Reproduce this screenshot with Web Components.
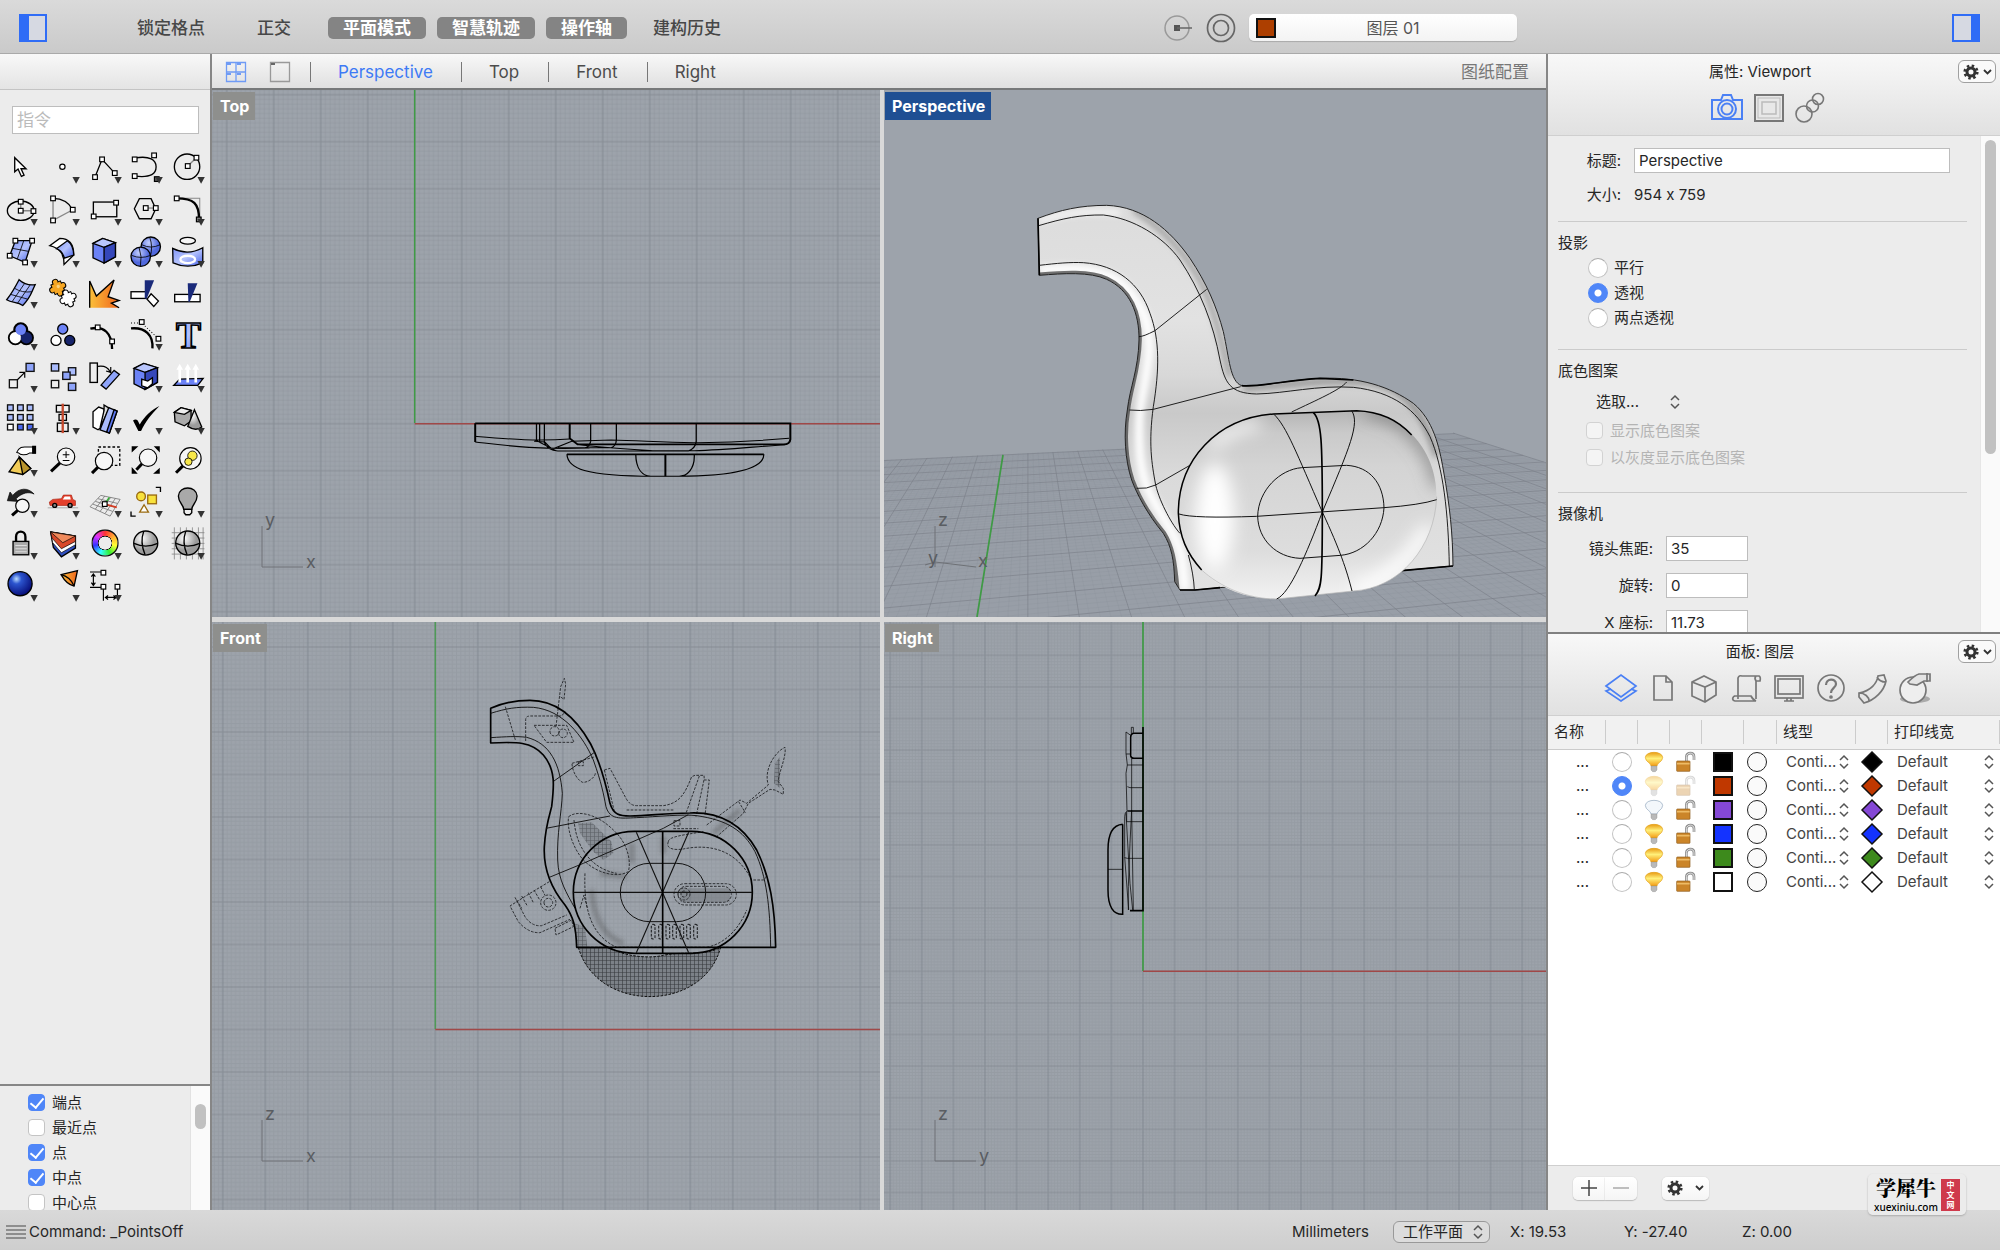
<!DOCTYPE html>
<html lang="zh-CN">
<head>
<meta charset="utf-8">
<title>Rhino</title>
<style>
  html, body { margin: 0; height: 100%; }
  body { font: 15px/20px Inter, "Noto Sans CJK SC", sans-serif; font-feature-settings: "calt" 0; color: #262626; overflow: hidden; background: #ececec; }
  svg { display: block; }
</style>
</head>
<body>
<rh-app></rh-app>
<script>
const BASE = `<style>
*{box-sizing:border-box}
button,input,select{font:inherit;font-feature-settings:inherit;color:inherit;margin:0;padding:0;border:0;background:none;border-radius:0;outline:0}
button{cursor:default;display:flex;align-items:center;justify-content:center}
svg{display:block;overflow:visible}
input[type=radio],input[type=checkbox]{appearance:none;flex:none}
input[type=radio]{width:20px;height:20px;border-radius:50%;background:#fff;border:1px solid #c4c4c4;border-top-color:#aaa}
input[type=radio]:checked{background:radial-gradient(circle,#fff 0 3px,#4f86f8 4px);border-color:#4f86f8}
input[type=checkbox]{width:17px;height:17px;border-radius:4px;background:#fff;border:1px solid #c4c4c4;display:grid;place-items:center}
input[type=checkbox]:checked{background:#4f86f8;border-color:#4f86f8}
input[type=checkbox]:checked::before{content:"";width:6px;height:11px;margin-bottom:3px;border:solid #fff;border-width:0 2px 2px 0;transform:rotate(40deg)}
input[type=checkbox]:disabled{background:#f4f4f4;border-color:#d2d2d2}
input[type=text]{background:#fff;border:1px solid #bdbdbd;min-width:0}
select{appearance:none;text-overflow:ellipsis}
.pop{display:grid;align-items:center}
.pop>*{grid-area:1/1}
.pop>svg{justify-self:end;pointer-events:none}
</style>`;
function define(name, html, setup) {
  customElements.define(name, class extends HTMLElement {
    constructor() {
      super();
      this.attachShadow({ mode: 'open' }).innerHTML = BASE + (typeof html === 'function' ? html(this) : html);
      if (setup) setup(this);
    }
  });
}
const UPDOWN = `<svg width="10" height="14" viewBox="0 0 10 14" fill="none" stroke="#555" stroke-width="1.5"><path d="M1 5 5 1 9 5M1 9 5 13 9 9"/></svg>`;
const GEAR = `<svg width="16" height="16" viewBox="-8 -8 16 16" fill="none" stroke="#333"><circle r="4" stroke-width="3"/><circle r="6.3" stroke-width="2.6" stroke-dasharray="2.47 2.47"/></svg>`;
const CHEV = `<svg width="9" height="6" viewBox="0 0 9 6" fill="none" stroke="#333" stroke-width="1.8"><path d="M1 1 4.500 4.500 8 1"/></svg>`;

/* ---------- top tool bar ---------- */
define('rh-toolbar', `<style>
:host{display:flex;align-items:center;height:54px;background:linear-gradient(#dadada,#cacaca);border-bottom:1px solid #a9a9a9;padding:2px 0 0 19px;font-size:17px}
.modes{display:flex;align-items:center;margin-left:75px;flex:1;gap:11px;color:#474747}
.modes button{height:22px;padding:0 15px;white-space:nowrap;border-radius:5px;font-weight:500}
.modes button.wide{margin:0 11px}
.modes button[aria-pressed=true]{background:#848484;color:#fff;font-weight:700}
.snap{display:flex;align-items:center;padding-right:30px;gap:14px}
.layer{display:flex;align-items:center;width:268px;height:27px;background:linear-gradient(#fff,#f3f3f3);border-radius:5px;box-shadow:0 1px 1px #aaa;padding:0 7px;font-size:16px;color:#555}
.layer i{width:20px;height:20px;background:#ad3f00;border:2px solid #111}
.layer span{flex:1;text-align:center}
.end{width:453px;display:flex;justify-content:flex-end;padding-right:20px}
</style>
<button aria-label="左侧边栏"><svg width="28" height="28"><rect x="1" y="1" width="26" height="26" fill="#d6d9e2" stroke="#2f6cf6" stroke-width="2"/><path d="M0 0H10V28H0Z" fill="#2f6cf6"/></svg></button>
<div class="modes"><button>锁定格点</button><button class="wide">正交</button><button aria-pressed="true">平面模式</button><button aria-pressed="true">智慧轨迹</button><button aria-pressed="true">操作轴</button><button>建构历史</button></div>
<div class="snap">
<button aria-label="记录"><svg width="28" height="28" fill="none"><circle cx="12" cy="14" r="12" stroke="#999" stroke-width="1.500"/><rect x="9" y="11" width="6" height="6" fill="#555"/><path d="M12 14H27" stroke="#666" stroke-width="1.500"/></svg></button>
<button aria-label="过滤"><svg width="28" height="28" fill="none" stroke="#666" stroke-width="1.700"><circle cx="14" cy="14" r="13.500"/><circle cx="14" cy="14" r="7.500"/></svg></button>
<button class="layer"><i></i><span>图层 01</span></button></div>
<div class="end"><button aria-label="右侧边栏"><svg width="28" height="28"><rect x="1" y="1" width="26" height="26" fill="#d6d9e2" stroke="#2f6cf6" stroke-width="2"/><path d="M19 0H28V28H19Z" fill="#2f6cf6"/></svg></button></div>`);

/* ---------- viewport tabs ---------- */
define('rh-tabs', `<style>
:host{display:flex;align-items:center;height:36px;background:linear-gradient(#f8f8f8,#e0e0e0);border-bottom:2px solid #77797a;padding:2px 17px 0 14px;font-size:17px;color:#4c4c4c}
nav{display:flex;align-items:center;flex:1}
nav>button+button{margin-left:24px}
nav a{color:inherit;text-decoration:none;padding:0 28px 0 27px;border-left:1px solid #777;line-height:20px}
nav a+a{padding-right:29px}
nav .first{margin-left:20px}
.on{color:#3d7af5}
.cfg{color:#777}
</style>
<nav><button aria-label="四视图"><svg width="20" height="20" fill="none" stroke="#6f9bf5" stroke-width="1.300"><path d="M.5.5H19.500V19.500H.5ZM10 0V20M0 10H20"/><path d="M1 2H5M11 2H15M1 12H5M11 12H15" stroke-width="2"/></svg></button>
<button aria-label="单视图"><svg width="20" height="20" fill="none" stroke="#999" stroke-width="1.300"><path d="M.5.5H19.500V19.500H.5Z"/><path d="M1 2H5" stroke="#666" stroke-width="2"/></svg></button>
<a class="first" href="#p"><span class="on">Perspective</span></a><a href="#t">Top</a><a href="#f">Front</a><a href="#r">Right</a></nav>
<button class="cfg">图纸配置</button>`);

/* ---------- tool box icons, each on a 125-unit cell ---------- */
const sq = (x, y, f = '#fff') => `<rect x="${x - 7}" y="${y - 7}" width="14" height="14" fill="${f}" stroke="#000" stroke-width="3.500"/>`;
const bx = (x, y, f, s = 24) => `<rect x="${x - s / 2}" y="${y - s / 2}" width="${s}" height="${s}" fill="${f}" stroke="#111" stroke-width="4"/>`;
const mag = (x, y, r, hx, hy, f = '#f6f6f6') => `<path d="M${x - r * .7} ${y + r * .7}L${hx} ${hy}" stroke-width="9"/><circle cx="${x}" cy="${y}" r="${r}" fill="${f}" stroke-width="3.500"/>`;
/* jigsaw piece: outline pass first, then the fills over it */
const piece = (x, y, f, bite) => {
  const body = `<rect x="-14" y="-14" width="28" height="28"/><circle cx="-17" r="7"/><circle cx="17" r="7"/><circle cy="-18" r="7"/><circle cy="18" r="7"/>`;
  return `<g transform="translate(${x} ${y}) rotate(-24)"><g stroke-width="6" fill="#000">${body}</g><g stroke="none" fill="${f}">${body}</g>${bite}</g>`;
};
const TOOLS = [
 ['选取', 0, `<path d="M44 35V77L54 69 64 91 72 87 63 68H78Z" fill="#fff" stroke-width="4"/>`],
 ['点', 1, `<circle cx="61" cy="62" r="8" fill="#fff" stroke-width="3.500"/>`],
 ['多重直线', 1, `<path d="M33 93 54 40 92 81"/>${sq(33,93)}${sq(54,40)}${sq(92,81)}`],
 ['曲线', 1, `<path d="M29 36C75 28 93 42 93 62S80 96 29 90"/>${sq(29,40)}${sq(87,28)}${sq(29,90)}${sq(95,99,'#555')}`],
 ['圆', 1, `<circle cx="60" cy="62" r="38"/><path d="M62 60 88 35" stroke="#888"/>${sq(62,60)}${sq(88,35)}`],
 ['椭圆', 1, `<ellipse cx="62" cy="68" rx="40" ry="29"/><path d="M62 41V68H100" stroke="#888"/>${sq(62,41)}${sq(62,68)}${sq(100,69)}`],
 ['圆弧', 1, `<path d="M33 31V97L92 65" stroke="#888"/><path d="M33 31Q75 32 92 65"/>${sq(33,31)}${sq(92,65)}${sq(33,97)}`],
 ['矩形', 1, `<rect x="28" y="42" width="70" height="44"/>${sq(96,44)}${sq(29,85)}`],
 ['多边形', 1, `<path d="M28 62 43 32H78L92 62 78 92H43Z"/><path d="M62 60H92" stroke="#888"/>${sq(62,60)}${sq(92,60)}`],
 ['圆角', 1, `<path d="M29 31H98V95" stroke="#888" stroke-width="3"/><path d="M29 31C80 31 96 45 96 95" stroke-width="7"/>${sq(29,31)}${sq(95,94,'#777')}`],
 ['曲面', 1, `<path d="M46 32H96L75 97 29 77Z" fill="url(#b)"/><path d="M71 32 52 86M38 55 86 64" stroke-width="2.500"/>${sq(46,32)}${sq(96,32)}${sq(75,97)}${sq(29,77)}`],
 ['单轨扫掠', 1, `<path d="M23 47 53 25C82 25 95 42 95 75L66 103C66 72 55 55 23 47Z" fill="#fff"/><path d="M43 56 76 32C90 42 94 55 95 75L67 84C62 68 55 60 43 56Z" fill="url(#b)"/>`],
 ['立方体', 1, `<path d="M27 40 56 25 94 38V80L60 99 27 83Z" fill="#6b82f6"/><path d="M27 40 56 25 94 38 60 52Z" fill="#b9c6fd"/><path d="M60 52V99L94 80V38Z" fill="#3547ba"/>`],
 ['布尔运算', 1, `<circle cx="77" cy="50" r="29" fill="url(#s)"/><circle cx="47" cy="80" r="29" fill="url(#s)"/><path d="M20 76Q48 88 76 76M42 52Q52 80 46 108M50 44Q78 58 105 44M74 22Q84 50 76 78" stroke-width="2.500"/>`],
 ['投影曲线', 1, `<ellipse cx="62" cy="32" rx="23" ry="10" fill="#fff" fill-opacity=".5"/><path d="M17 55Q62 78 107 53V98Q62 118 18 98Z" fill="url(#b)"/><ellipse cx="62" cy="88" rx="22" ry="11" stroke="#fff" stroke-width="7"/>`],
 ['网格', 1, `<path d="M57 26Q78 45 105 41C92 68 92 80 68 103 52 92 36 96 20 86 34 68 42 55 57 26Z" fill="url(#b)"/><path d="M44 52Q66 66 95 62M32 70Q54 76 82 84M73 38 36 92M90 42 52 97" stroke-width="2.500"/>`],
 ['组合', 0, piece(47, 50, '#f5a623', '<circle cx="3" cy="-3" r="5" fill="#fbd27e" stroke="none"/>') + piece(78, 82, '#fff', '')],
 ['炸开', 0, `<path d="M17 110V30L37 75 90 27 72 77 105 88 82 96 105 110" fill="url(#o)"/>`],
 ['修剪', 0, `<rect x="18" y="62" width="45" height="20" fill="#fff"/><path d="M66 84 78 68 100 90 86 106Z" fill="#fff"/><path d="M59 28H87L65 82H59Z" fill="#1a2a7a" stroke="none"/>`],
 ['分割', 0, `<rect x="23" y="70" width="76" height="22" fill="#fff"/><path d="M62 37H91L68 92H64Z" fill="#1a2a7a" stroke="none"/>`],
 ['群组', 1, `<g stroke-width="9"><circle cx="62" cy="50" r="18"/><circle cx="46" cy="74" r="18"/><circle cx="79" cy="74" r="18"/></g><g stroke="none"><circle cx="46" cy="74" r="17" fill="#fff"/><circle cx="79" cy="74" r="17" fill="#17246b"/><circle cx="62" cy="50" r="16" fill="#6b82f6"/></g>`],
 ['解散群组', 0, `<circle cx="62" cy="48" r="15" fill="#6b82f6"/><circle cx="42" cy="82" r="15" fill="#fff"/><circle cx="83" cy="82" r="15" fill="#17246b"/>`],
 ['编辑点', 0, `<path d="M19 47C60 38 84 60 84 108" stroke-width="7"/>${sq(41,43)}${sq(84,85)}`],
 ['控制点', 1, `<path d="M18 46C60 42 85 65 82 106" stroke-width="7"/><path d="M18 30H50L100 77" stroke-dasharray="3 6" stroke-width="3"/>${sq(50,27)}${sq(100,77)}`],
 ['文字', 0, `<text x="64" y="104" text-anchor="middle" font-family="Liberation Serif" font-weight="700" font-size="112" fill="url(#b)" stroke-width="5">T</text>`],
 ['移动', 1, `${bx(90,37,'#8ea4fa')}${bx(40,86,'#eee')}<path d="M52 74 72 54M58 52H74V68" stroke-width="3.500"/>`],
 ['复制', 0, `${bx(39,37,'#a9bbfc',22)}${bx(90,49,'#a9bbfc',22)}${bx(73,62,'#8ea4fa',22)}${bx(90,95,'#8ea4fa',22)}${bx(39,87,'#eee',22)}`],
 ['旋转', 0, `<rect x="18" y="24" width="22" height="58" fill="#eee"/><path d="M42 34Q68 30 78 50M80 36V52L66 48" stroke-width="3.500"/><path d="M51 90 90 46 106 58 66 102Z" fill="#8ea4fa"/>`],
 ['实体工具', 1, `<path d="M27 40 56 25 97 38V82L60 103 27 86Z" fill="#6b82f6"/><path d="M27 40 56 25 97 38 60 52Z" fill="#b9c6fd"/><path d="M60 52V103L97 82V38Z" fill="#3547ba"/><path d="M50 72 68 78 82 68V86L68 98 50 92Z" fill="#fff"/>`],
 ['法线', 1, `<path d="M20 91 38 72 108 70 92 91Z" fill="#6b82f6"/><path d="M38 82V38M62 82V38M86 82V38" stroke="#fff" stroke-width="8"/><path d="M28 44 38 26 48 44ZM52 44 62 26 72 44ZM76 44 86 26 96 44Z" fill="#fff" stroke="none"/>`],
 ['阵列', 1, [32,61,90].map((y,r)=>[31,61,90].map((x,c)=>bx(x,y,r==2?(c?'#4b68ee':'#fff'):'#a9bbfc',17)).join('')).join('')],
 ['对齐', 1, `<rect x="43" y="25" width="38" height="20" fill="#eee"/><rect x="51" y="52" width="22" height="18" fill="#eee"/><rect x="46" y="78" width="32" height="25" fill="#eee"/><path d="M62 20V108" stroke="#c5482c" stroke-width="7"/>`],
 ['镜像', 1, `<path d="M27 44 44 30 60 36V84L42 98 27 90Z" fill="#fff"/><path d="M60 24 76 34 48 92 60 40Z" fill="#ddd"/><path d="M74 32 99 42 76 108 48 98Z" fill="#a9bbfc"/><path d="M90 38 99 42 76 108 68 104Z" fill="#5c77ee"/>`],
 ['检查', 1, `<path d="M24 70Q32 64 38 70L44 82C58 58 80 38 103 27 80 50 60 75 48 102H40Z" fill="#000" stroke="none"/>`],
 ['着色', 1, `<path d="M22 46 42 32 72 40V72L52 86 24 74Z" fill="#aaa"/><path d="M22 46 42 32 72 40 52 52Z" fill="#eee"/><path d="M82 38 104 90Q86 104 62 88Z" fill="url(#g)"/>`],
 ['操作轴工具', 1, `<path d="M50 40C58 20 72 24 82 24H106V42H88C76 50 60 48 56 42Z" fill="#fff" stroke-width="3"/><path d="M98 22H106V42H98Z" fill="#000"/><path d="M27 98 58 54 92 88 68 106Z" fill="#f2cc57"/><path d="M58 54 68 106 92 88Z" fill="#b8942c"/>`],
 ['缩放', 0, `${mag(72,53,26,27,97)}<path d="M62 47H82M72 37V57M62 64H82" stroke-width="3"/>`],
 ['框选缩放', 0, `<rect x="43" y="24" width="64" height="55" stroke-dasharray="8 6"/>${mag(60,66,26,24,102)}`],
 ['缩放至最大', 0, `${mag(69,56,26,34,92)}<path d="M20 22H40L20 40ZM104 22H86L104 40ZM20 104V84L38 104ZM104 104H84L104 86Z" fill="#000" stroke="none"/>`],
 ['缩放选取物体', 0, `${mag(70,58,32,27,101)}<g fill="#f8e84a" stroke-width="2.500"><circle cx="76" cy="50" r="14"/><circle cx="64" cy="68" r="11"/></g>`],
 ['复原视图', 1, `<path d="M22 62 30 36 38 46C58 22 84 22 102 42 86 34 66 38 48 56L54 64Z" fill="#222" stroke-width="2"/>${mag(67,77,20,36,106)}`],
 ['设置视图', 1, `<path d="M17 83H108" stroke="#bbb" stroke-width="4"/><path d="M22 66 32 58 58 56 64 45H88L92 58 100 62V76H24Z" fill="#e4402c" stroke="#a21" stroke-width="2"/><path d="M68 49H84L86 58H62Z" fill="#fff" stroke="none"/><circle cx="38" cy="76" r="6" fill="#888"/><circle cx="84" cy="76" r="6" fill="#888"/>`],
 ['工作平面', 1, `<path d="M50 46 108 58 78 108 18 80ZM62 48 34 87M80 52 48 94M94 55 63 100M42 56 100 70M34 64 94 82M26 72 86 94" stroke="#777" stroke-width="2.500"/><path d="M62 72 76 52" stroke="#3a3" stroke-width="5"/><path d="M62 72 98 82" stroke="#d43b22" stroke-width="5"/>${sq(62,72)}`],
 ['选取物件', 1, `<circle cx="48" cy="49" r="13" fill="#f8e23c" stroke="#9a6b10"/><rect x="68" y="45" width="26" height="26" fill="#f8e23c" stroke="#9a6b10"/><path d="M57 74 70 96H44Z" fill="#fff" stroke="#9a6b10"/><path d="M92 22H106V36M18 94V108H32" stroke-width="4"/>`],
 ['灯光', 1, `<path d="M50 88C50 74 34 68 34 48 36 16 88 16 90 48 90 68 74 74 74 88Z" fill="#a9a9a9"/><path d="M51 88H74V98L68 104H56L51 98Z" fill="#eee"/>`],
 ['锁定', 1, `<path d="M48 60V44C48 24 76 24 76 44V60" stroke-width="7"/><rect x="39" y="58" width="47" height="40" fill="#aaa"/><path d="M46 70H80M46 80H80M46 89H80" stroke="#ddd" stroke-width="3"/>`],
 ['图层', 1, `<path d="M26 30 100 42V78L58 104 34 76Z" fill="#2f4fc0"/><path d="M26 30 100 42V68L58 92 32 62Z" fill="#fff" stroke-width="2"/><path d="M26 30 100 42V58L58 80 30 48Z" fill="#d8492a" stroke-width="2"/><path d="M26 30 100 42 62 62Z" fill="#f08a5c" stroke-width="2"/>`],
 ['颜色', 1, `<foreignObject x="22" y="22" width="82" height="82"><div xmlns="http://www.w3.org/1999/xhtml" style="width:82px;height:82px;border-radius:50%;border:4px solid #111;background:radial-gradient(circle,#ececec 0 19px,#111 20px 21px,transparent 22px),conic-gradient(#f33,#fa3,#ff3,#3e3,#3ff,#33f,#d3f,#f33)"></div></foreignObject>`],
 ['着色球', 0, `<circle cx="62" cy="63" r="36" fill="url(#g)"/><path d="M27 64Q62 80 98 64M56 28Q44 60 60 98" stroke-width="4"/>`],
 ['网格球', 1, `<path d="M14 32H112M14 48H112M14 64H112M14 80H112M14 96H112M22 16V112M40 16V112M58 16V112M76 16V112M94 16V112M108 16V112" stroke="#888" stroke-width="2.500"/><circle cx="62" cy="63" r="36" fill="url(#g)"/><path d="M27 64Q62 80 98 64M56 28Q44 60 60 98" stroke-width="4"/>`],
 ['渲染', 1, `<circle cx="60" cy="59" r="36" fill="url(#n)"/>`],
 ['聚光灯', 1, `<path d="M57 32 106 20 96 66Q74 62 57 32Z" fill="url(#o)"/><path d="M57 32Q84 38 96 66" />`],
 ['标注', 1, `<path d="M18 24H52M18 70H52M28 32V62M22 38 28 30 34 38M22 56 28 64 34 56M58 70V110M100 70V98M66 100H94M72 94 64 100 72 106M88 94 96 100 88 106" stroke-width="3.500"/>${sq(58,26)}${sq(58,68)}${sq(100,68)}`],
];
const DEFS = `<defs><linearGradient id="b" x2="1" y2="1"><stop stop-color="#7f95f8"/><stop offset=".5" stop-color="#b4c2fd"/><stop offset="1" stop-color="#4560e8"/></linearGradient><linearGradient id="o" x2="1"><stop stop-color="#fbc03a"/><stop offset="1" stop-color="#f0641c"/></linearGradient><radialGradient id="s" cx=".4" cy=".3"><stop stop-color="#c3cffd"/><stop offset="1" stop-color="#5068dd"/></radialGradient><radialGradient id="g" cx=".35" cy=".3"><stop stop-color="#fff"/><stop offset="1" stop-color="#9b9b9b"/></radialGradient><radialGradient id="n" cx=".35" cy=".3" r=".7"><stop stop-color="#b9dcff"/><stop offset=".3" stop-color="#2c55cf"/><stop offset="1" stop-color="#08107c"/></radialGradient></defs>`;
define('rh-toolbox', `<style>
:host{display:flex;flex-direction:column;min-height:0;flex:1}
header{height:36px;background:linear-gradient(#f8f8f8,#e4e4e4);border-bottom:1px solid #c4c4c4}
input[type=text]{margin:16px 11px 12px 12px;height:28px;padding:0 4px;font-size:17px}
input::placeholder{color:#bbb}
.grid{display:grid;grid-template:repeat(11,1fr)/repeat(5,1fr);height:459px;width:209px}
.grid svg{width:100%;height:100%}
</style><header></header><input type="text" placeholder="指令" aria-label="指令">
<div class="grid">${TOOLS.map(([n, a, s]) => `<button aria-label="${n}"><svg viewBox="0 0 125 125" fill="none" stroke="#000" stroke-width="4">${DEFS}${s}${a ? '<path d="M91 93H113L102 113Z" fill="#333" stroke="none"/>' : ''}</svg></button>`).join('')}</div>`);

define('rh-osnap', `<style>
:host{display:flex;height:126px;border-top:2px solid #868686;overflow:hidden}
.list{flex:1;padding:4px 0 0 28px}
label{display:flex;align-items:center;height:25px;gap:7px;white-space:nowrap}
.bar{width:20px;background:#fafafa;border-left:1px solid #e2e2e2;padding:18px 4px}
.bar i{display:block;height:25px;width:11px;border-radius:6px;background:#c1c1c1}
</style><div class="list">${[['端点',1],['最近点',0],['点',1],['中点',1],['中心点',0]].map(([t,c])=>`<label><input type="checkbox"${c?' checked':''}>${t}</label>`).join('')}</div><div class="bar"><i></i></div>`);

/* ---------- viewports ---------- */
define('rh-viewport', el => `<style>
:host{display:grid;background:#9da3ab;overflow:hidden;min-width:0;min-height:0}
:host>*,.t,::slotted(svg){grid-area:1/1}
::slotted(svg){width:100%;height:100%;min-height:0}
.t{z-index:1;justify-self:start;align-self:start;margin:2px 0 0 1px;padding:1px 6px 0 7px;font:700 16px/27px Inter,sans-serif;color:#fff;background:#8e8f8d}
:host([active]) .t{background:#1f4f93}
</style><slot></slot><span class="t">${el.getAttribute('name')}</span>`);

function planar(id, x, y, w, h, ox, oy, step) {
  const m = step / 10;
  let d = '';
  for (let i = 1; i < 10; i++) d += `M${i * m} 0V${step}M0 ${i * m}H${step}`;
  return `<defs><pattern id="${id}" x="${ox}" y="${oy}" width="${step}" height="${step}" patternUnits="userSpaceOnUse"><path d="${d}" stroke="#858b94" stroke-opacity=".3" stroke-width="1"/><path d="M0 0V${step}M${step} 0V${step}M0 0H${step}M0 ${step}H${step}" stroke="#7f858d" stroke-opacity=".75" stroke-width="1.200"/></pattern></defs><rect x="${x}" y="${y}" width="${w}" height="${h}" fill="url(#${id})"/>`;
}
const axes = (x, y, up, right) => `<path d="M${x} ${y - 41}V${y}H${x + 41}" fill="none" stroke="#6e7176"/><g font-family="Inter" font-size="18" fill="#5a5d62"><text x="${x + 3}" y="${y - 41}">${up}</text><text x="${x + 44}" y="${y + 1}">${right}</text></g>`;
const frame = (x, y, w, h, inner) => `<svg viewBox="${x} ${y} ${w} ${h}" preserveAspectRatio="xMidYMid slice">${inner}</svg>`;

const topView = frame(212, 90, 668, 527, planar('gt', 212, 90, 668, 527, 414.7, 423.7, 47) +
 `<path d="M414.700 90V423" stroke="#3f9b45" stroke-width="1.500"/><path d="M414.700 423.700H880" stroke="#a04848" stroke-width="1.500"/>${axes(262, 567, 'y', 'x')}
 <g transform="translate(200 400) scale(.3954 .33333)" fill="none" stroke="#000"><g stroke-width="5"><path d="M696 70H1493V118Q1492 133 1476 133H955L935 115V70M696 70V126"/><path d="M928 163H1426M1177 163V229"/></g><g stroke-width="3.200"><path d="M696 109C790 118 850 124 935 117M696 126C770 136 850 150 985 144M851 70V124M859 70V124M871 70V128Q880 152 905 153H1235Q1253 145 1255 125V70M988 70V124Q985 143 970 144M1053 70V120Q1052 138 1040 143H905M845 124 872 126 890 148 940 124 1040 120C1120 122 1180 129 1260 128S1420 122 1490 115M955 133C1020 145 1100 149 1150 152H1250C1330 150 1400 140 1480 134M848 120 900 152M928 163C930 205 970 229 1150 229H1210C1360 228 1426 205 1426 163M1102 163C1103 210 1120 228 1140 229M1250 163C1252 210 1230 228 1212 229"/></g></g>`);

const rightView = frame(884, 622, 662, 588, planar('gr', 884, 622, 662, 588, 1143, 971.3, 31.6) +
 `<path d="M1143 622V971" stroke="#3f9b45" stroke-width="1.700"/><path d="M1143 971.300H1548" stroke="#a04848" stroke-width="1.500"/>${axes(935, 1161, 'z', 'y')}
 <g transform="translate(880 610) scale(.33333)" fill="none" stroke="#000"><g stroke-width="4.500"><path d="M789 351V902H750" stroke-width="5"/><path d="M789 370H760Q752 372 752 382V438Q754 445 762 445H789M789 603H742M728 643V913C700 914 684 890 684 840V720C684 670 700 645 728 643"/></g><g stroke-width="2.500" opacity=".85"><path d="M754 370V352H760V368M752 376 738 366V430L742 465 738 490 741 602M738 432H752M742 465H789M742 530 750 533H789M755 445V600L760 900M742 603Q733 606 734 630V740L746 900M740 606V635H789M734 743 742 745H789M738 610 750 820 758 900M755 600 750 700 745 830V900M684 778H728"/></g></g>`);

const BODY_F = 'M122 145C160 128 200 121 240 121 330 121 385 185 422 252 450 305 465 360 480 430 490 465 510 468 540 468 600 468 640 459 720 459 820 455 880 500 920 570 960 650 975 740 977 862H380C378 800 370 770 345 735 300 680 280 620 283 560 286 500 300 460 305 440 312 380 318 330 280 285 245 245 200 245 122 249Z';
const frontView = frame(212, 622, 668, 588, planar('gf', 212, 622, 668, 588, 435.3, 1029.5, 42.5) +
 `<path d="M435.300 622V1029" stroke="#3f9b45" stroke-opacity=".8" stroke-width="1.500"/><path d="M435.300 1029.500H880" stroke="#a04848" stroke-width="1.500"/>${axes(262, 1161, 'z', 'x')}
 <defs><pattern id="hatch" width="12" height="12" patternUnits="userSpaceOnUse"><path d="M0 0H12V12H0Z" fill="#74797f" fill-opacity=".8"/><path d="M0 0V12M0 0H12" stroke="#34373b" stroke-width="3.500"/></pattern><filter id="bl" x="-50%" y="-50%" width="200%" height="200%"><feGaussianBlur stdDeviation="6"/></filter></defs>
 <g transform="translate(450 660) scale(.33333)" fill="none" stroke="#111" stroke-linejoin="round">
 <path d="M385 862C440 1059 760 1059 812 862C760 890 700 872 640 886S500 880 480 862Z" fill="url(#hatch)" stroke-width="3" stroke-dasharray="8 4"/><path d="M372 790 405 800 412 862H380Z" fill="url(#hatch)" stroke="none" opacity=".7"/>
 <g filter="url(#bl)" stroke="#444" stroke-opacity=".35" stroke-width="16"><path d="M425 690C430 770 460 830 520 850M450 640 530 650M545 550V610M640 530V580M790 520 870 450" /></g>
 <path d="M385 490 425 487 485 545 490 580 460 600 430 575 390 520Z" fill="url(#hatch)" stroke="none" opacity=".65"/>
 <path d="M975 310 990 290V385L972 370Z" fill="url(#hatch)" stroke="none" opacity=".7"/><path d="M690 685H840V725H690Z" fill="#55585c" fill-opacity=".3" stroke="none"/>
 <g stroke-width="2.800" stroke-dasharray="8 4" stroke="#26282b">
 <path d="M318 200 332 80 343 55 347 72 342 118 328 108M166 140 197 243M227 243V178Q228 168 240 168H335L345 155M252 196H350L372 247H290ZM300 214A14 14 0 1 0 328 214 14 14 0 1 0 300 214M326 220A13 13 0 1 0 352 220 13 13 0 1 0 326 220M366 310 436 290M436 340C435 352 415 368 398 367 380 360 366 330 366 310M385 305H400V317H385Z"/>
 <path d="M463 330 480 325 528 415Q540 437 560 437H640C690 430 705 400 725 350L735 346H762L763 360H778L765 465M748 348 708 460M762 360 738 470M463 330 492 450M530 450H670"/>
 <path d="M770 495 870 420 890 430 955 375C940 330 975 275 1005 262 1010 290 985 340 985 365L1000 385V403L975 390 960 388 895 430 880 460 800 530M866 425 886 458M672 482H690V498H672ZM670 506H745M655 545C655 530 700 525 760 515M655 545C645 570 680 570 700 567 780 550 860 570 905 660H940Q950 655 948 640"/>
 <path d="M356 470C380 450 440 460 490 510 530 545 545 600 535 635 500 655 440 640 400 600 365 560 350 500 356 470ZM372 480C380 580 440 630 500 640M405 640C400 760 430 830 500 862H770C830 850 870 800 890 750M480 862H840"/>
 <path d="M298 665 240 700 180 738 205 785Q235 820 270 818L360 778M195 712 225 770Q245 800 275 797L350 765M315 805 365 780 370 800 318 825ZM200 720 215 745M215 708 232 738M235 698 250 728M252 690 268 718M272 680 285 706M272 728A23 23 0 1 0 318 728 23 23 0 1 0 272 728M282 728A13 13 0 1 0 308 728 13 13 0 1 0 282 728M390 745 402 705 412 745"/>
 <rect x="672" y="671" width="187" height="64" rx="32"/><rect x="684" y="679" width="160" height="48" rx="24"/><circle cx="702" cy="702" r="18"/><circle cx="702" cy="702" r="9"/>
 ${[604,626,648,668,690,710,731].map(x=>`<rect x="${x}" y="793" width="11" height="44" rx="5" stroke-width="3.500"/>`).join('')}
 </g>
 <path d="${BODY_F}" stroke="#000" stroke-width="5"/>
 <g stroke-width="2.800"><path d="M122 160C170 145 200 140 250 142 340 150 400 230 430 300 455 370 460 400 468 440 480 480 510 475 560 473 620 470 700 462 740 467 830 480 880 510 915 575 950 650 960 740 962 862M122 233C170 230 200 228 230 232 300 250 330 310 337 400 335 460 320 520 323 600 325 660 350 700 375 745M312 363 435 276M288 505 480 468M298 652 400 610 640 505 715 464"/></g>
 <rect x="370" y="514" width="537" height="366" rx="183" stroke="#000" stroke-width="5"/><rect x="511" y="610" width="256" height="175" rx="87" stroke-width="3"/>
 <path d="M370 697H907M559 517 716 878M716 517 559 878" stroke-width="3.300"/><path d="M638 514V880" stroke="#000" stroke-width="5"/></g>`);

/* ground plane: depth lines meet at V1, cross lines at V2, both on y = 297 */
function ground() {
  const V1 = [1028, 297], V2x = 4343, farY = x => 433 + (1453 - x) * .0474;
  let a = '', c = '';
  const depth = x0 => {
    const y0 = farY(x0), t = (900 - 297) / (y0 - 297);
    return `M${x0} ${y0}L${V1[0] + (x0 - V1[0]) * t} 900`;
  };
  for (let k = -60; k < 18; k++) {
    const x = 1003 + k * 25.3 * (k > 0 ? .985 : 1);
    a += depth(x);
    if (k < 17) for (let j = 1; j < 5; j++) c += depth(x + j * 5.06);
  }
  a += depth(1453);
  for (let n = 0; n < 16; n += .2) {
    const d = 1 / (.00633 - n * .00025), y = 297 + d;
    const sl = (y - 297) / (V2x - 1003), k = (1453 - 1028) / 136;
    const xr = (297 + d + 1003 * sl - 297 + 1028 / k) / (sl + 1 / k);
    const seg = `M800 ${y + 203 * sl}L${xr} ${y - (xr - 1003) * sl}`;
    if (Math.abs(n - Math.round(n)) < .05) a += seg; else c += seg;
  }
  return `<path d="M884 460 1453 433 2000 608V900H884Z" fill="#8d94a0" fill-opacity=".3"/><path d="${c}" stroke="#79818b" stroke-opacity=".12" fill="none"/><path d="${a}" stroke="#7b8089" stroke-opacity=".65" fill="none"/>`;
}
const BODY_P = 'M114 115C180 90 240 76 320 76 430 80 510 150 570 235 620 310 650 380 670 455 688 535 690 605 725 617 780 622 860 600 960 595 1080 590 1170 620 1240 670 1300 720 1318 800 1330 870 1350 980 1358 1060 1359 1158L1205 1172 585 1230H540L524 1205C522 1140 515 1100 490 1060 440 1000 410 940 395 900 375 840 370 760 382 690 390 620 415 570 417 480 418 400 390 330 320 298 270 275 190 280 118 286Z';
const WHEEL = 'M820 702 1070 692C1200 695 1310 800 1310 950 1305 1100 1200 1225 1060 1233L830 1257C660 1257 540 1150 535 1000 535 840 650 715 820 702Z';
const perspView = frame(884, 90, 662, 527, ground() +
 `<path d="M1003 455 977 617" stroke="#3f9b45" stroke-width="1.700"/>
 <path d="M935 526V567M925 565 935 562 976 567" fill="none" stroke="#6e7176"/><g font-family="Inter" font-size="18" fill="#5a5d62"><text x="938" y="526">z</text><text x="928" y="564">y</text><text x="978" y="567">x</text></g>
 <defs><linearGradient id="pb" x2="0" y2="1"><stop stop-color="#dcdcdc"/><stop offset=".3" stop-color="#e2e2e2"/><stop offset=".44" stop-color="#d8d8d8"/><stop offset=".54" stop-color="#c9c9c9"/><stop offset=".7" stop-color="#dadada"/><stop offset="1" stop-color="#e2e2e2"/></linearGradient>
 <linearGradient id="pw" x2="0" y2="1"><stop stop-color="#b4b4b4"/><stop offset=".12" stop-color="#cacaca"/><stop offset=".3" stop-color="#d4d4d4"/><stop offset=".75" stop-color="#dddddd"/><stop offset="1" stop-color="#f2f2f2"/></linearGradient>
 <filter id="f1" x="-50%" y="-50%" width="200%" height="200%"><feGaussianBlur stdDeviation="9"/></filter><filter id="f2" x="-50%" y="-50%" width="200%" height="200%"><feGaussianBlur stdDeviation="26"/></filter><clipPath id="cb"><path d="${BODY_P}"/></clipPath><clipPath id="cw"><path d="${WHEEL}"/></clipPath></defs>
 <g transform="translate(1000 180) scale(.33333)" fill="none" stroke="#111">
 <path d="${BODY_P}" fill="url(#pb)" stroke="none"/>
 <g clip-path="url(#cb)"><g filter="url(#f1)">
 <path d="M400 90C500 150 560 230 600 300 650 400 672 520 690 590" stroke="#888" stroke-width="12"/><path d="M118 122C200 98 260 90 360 100" stroke="#fff" stroke-width="12"/>
 <path d="M118 270C220 262 330 265 385 330 440 400 450 440 447 520 440 600 420 660 418 720 415 830 425 880 440 920 480 1010 530 1060 545 1130L555 1230" stroke="#fff" stroke-width="26"/>
 <path d="M730 624C860 618 960 596 1090 606S1270 700 1310 830" stroke="#777" stroke-width="12"/></g>
 <path d="M118 286C190 280 270 275 320 298 390 330 418 400 417 480 415 570 390 620 382 690 370 760 375 840 395 900 410 940 440 1000 490 1060 515 1100 522 1140 530 1225" stroke="#444" stroke-opacity=".75" stroke-width="17"/></g>
 <path d="${BODY_P}" stroke="#222" stroke-width="3"/>
 <path d="M114 115 118 286M540 1230H585L660 1223M1205 1172 1359 1158M725 617C780 622 860 600 960 595L1060 600" stroke="#000" stroke-width="5"/>
 <g stroke-width="2.800"><path d="M116 137C190 115 240 104 310 105 400 115 490 170 540 240 600 330 640 430 660 540 675 610 690 640 770 642 860 640 950 615 1060 622 1180 635 1250 690 1290 770 1330 860 1345 1000 1348 1158M118 256C170 250 210 246 250 248 350 255 420 310 450 400 480 480 478 570 460 680 445 790 455 850 467 915 480 970 520 1040 540 1060M565 1125C575 1160 582 1200 583 1230M417 470Q430 470 465 452L620 328M388 690Q420 694 460 688L722 620M410 925Q440 928 467 915L568 857M875 696C950 660 1020 630 1040 606"/></g>
 <path d="${WHEEL}" fill="url(#pw)" stroke="none"/>
 <g clip-path="url(#cw)"><g filter="url(#f2)"><ellipse cx="645" cy="1010" rx="58" ry="160" fill="#fff" stroke="none"/><path d="M630 800Q690 745 780 728" stroke="#fff" stroke-width="28"/><path d="M1290 1040Q1200 1190 1060 1235" stroke="#fff" stroke-width="44"/><path d="M1100 690C1210 700 1305 800 1318 920" stroke="#777" stroke-width="30"/></g></g>
 <path d="M1310 950C1305 1100 1200 1225 1060 1233L830 1257C740 1257 660 1220 605 1170" stroke="#b5b5b5" stroke-width="2"/><path d="M605 1170C560 1120 538 1070 535 1000 535 840 650 715 820 702L1070 692C1130 694 1190 715 1235 765" stroke="#000" stroke-width="4.500"/>
 <g stroke-width="3"><path d="M537 1002Q580 1016 770 1009L1152 983Q1260 975 1310 959M822 703C860 740 890 820 967 996 1020 1110 1040 1170 1056 1233M1055 692C1080 730 1050 800 967 996 920 1120 870 1240 830 1257M905 863 1040 856C1110 860 1150 910 1152 983 1148 1060 1090 1120 1022 1126L900 1135C830 1132 775 1080 773 1009 775 930 840 868 905 863Z"/><path d="M940 698C965 720 967 790 967 996S965 1225 945 1248" stroke="#000" stroke-width="5"/></g></g>`);

/* ---------- panel header with title, gear button and icon row ---------- */
define('rh-panel-head', el => `<style>
:host{display:flex;flex-direction:column;height:82px;background:linear-gradient(#f8f8f8,#e1e1e1);border-bottom:1px solid #cfcfcf;flex:none}
.top{display:grid;grid-template-columns:10px 1fr 38px;padding:6px 4px 0;align-items:center}
.top span{text-align:center}
.gear{height:23px;border:1px solid #a0a0a0;border-radius:6px;background:#fafafa;gap:4px}
.row{display:flex;justify-content:center;align-items:center;height:50px;padding-right:12px}
</style><div class="top"><i></i><span>${el.getAttribute('heading')}</span><button class="gear" aria-label="选项">${GEAR}${CHEV}</button></div><div class="row"><slot></slot></div>`);

define('rh-properties', `<style>
:host{display:flex;flex-direction:column;height:580px;border-bottom:2px solid #808080;overflow:hidden}
.body{flex:1;display:flex;min-height:0}
form{flex:1;padding:0 13px 0 10px;overflow:hidden}
section{border-top:1px solid #cbcbcb;padding:10px 0 0}
section:first-child{border:0;padding-top:12px;height:85px}
h3{font:inherit;margin:0;height:22px;line-height:22px}
.f{display:grid;grid-template-columns:63px 316px;column-gap:13px;align-items:center;height:25px;text-align:right}
.f input,.c input{height:25px;padding:0 4px}
.f span{text-align:left}
.f+.f{margin-top:9px}
.r{display:flex;align-items:center;gap:6px;height:25px;padding-left:30px}
.k{display:flex;align-items:center;gap:7px;height:27px;padding-left:28px;color:#b4b4b4}
.c{display:grid;grid-template-columns:95px 82px;column-gap:13px;align-items:center;text-align:right;height:25px;margin-bottom:12px}
.pop{width:84px;margin:9px 0 4px 38px;height:22px}
.icons{gap:11px;display:flex;align-items:center}
.bar{width:20px;background:#fafafa;border-left:1px solid #e6e6e6;padding:4px 4px}
.bar i{display:block;width:11px;height:314px;border-radius:6px;background:#c1c1c1}
.p{height:128px}.b{height:143px}.p h3{margin-bottom:1px}
.cam h3{margin-bottom:11px}
</style><rh-panel-head heading="属性: Viewport"><div class="icons" style="display:flex;gap:11px;align-items:center">
<svg width="32" height="28" fill="none" stroke="#4a80f5" stroke-width="2"><path d="M1 6H10L12 1H20L22 6H31V25H1Z"/><circle cx="16" cy="15" r="9"/><circle cx="16" cy="15" r="5.500"/></svg>
<svg width="30" height="28" fill="#e8e8e8" stroke="#777" stroke-width="2"><rect x="1" y="1" width="28" height="26"/><rect x="4" y="4" width="22" height="20" stroke="#bbb" stroke-width="1"/><rect x="8" y="8" width="14" height="12" stroke="#bbb" stroke-width="1.500"/></svg>
<svg width="30" height="30" fill="none" stroke="#777" stroke-width="1.600"><circle cx="9" cy="21" r="8"/><circle cx="17.500" cy="13" r="6"/><circle cx="23" cy="6" r="5.500"/></svg></div></rh-panel-head>
<div class="body"><form>
<section><div class="f"><label for="ttl">标题:</label><input id="ttl" type="text" value="Perspective"></div><div class="f">大小:<span>954 x 759</span></div></section>
<section class="p"><h3>投影</h3><label class="r"><input type="radio" name="proj">平行</label><label class="r"><input type="radio" name="proj" checked>透视</label><label class="r"><input type="radio" name="proj">两点透视</label></section>
<section class="b"><h3>底色图案</h3><div class="pop"><select aria-label="底色图案"><option>选取...</option></select>${UPDOWN}</div><label class="k"><input type="checkbox" disabled>显示底色图案</label><label class="k"><input type="checkbox" disabled>以灰度显示底色图案</label></section>
<section class="cam"><h3>摄像机</h3><div class="c"><label for="len">镜头焦距:</label><input id="len" type="text" value="35"></div><div class="c"><label for="rot">旋转:</label><input id="rot" type="text" value="0"></div><div class="c"><label for="px">X 座标:</label><input id="px" type="text" value="11.73"></div></section>
</form><div class="bar"><i></i></div></div>`);

/* ---------- layers ---------- */
const bulb = (m) => `<svg width="18" height="20" viewBox="0 0 54 60" opacity="${m === 'dim' ? .4 : 1}"><path d="M18 42C18 32 1 30 1 16 3 -4 51 -4 53 16 53 30 36 32 36 42Z" fill="${m === 'off' ? '#f3f7fb' : 'url(#y)'}" stroke="${m === 'off' ? '#8fa5bb' : '#e2a21b'}" stroke-width="2"/><path d="M18 42H36V54L31 59H23L18 54Z" fill="#b9b9b9" stroke="#888"/><defs><linearGradient id="y" x2="0" y2="1"><stop stop-color="#e99a12"/><stop offset=".45" stop-color="#fff07a"/><stop offset="1" stop-color="#f39a12"/></linearGradient></defs></svg>`;
const lock = (m) => `<svg width="20" height="20" viewBox="0 0 60 60" opacity="${m === 'dim' ? .35 : 1}"><path d="M31 28V14C33 0 54 0 54 14V24" fill="none" stroke="#8d8d8d" stroke-width="8"/><path d="M31 28V14C33 0 54 0 54 14V24" fill="none" stroke="#e4e4e4" stroke-width="3"/><rect x="2" y="27" width="40" height="31" rx="2" fill="#cb8529" stroke="#8d5b1b" stroke-width="2"/><path d="M3 35H41" stroke="#edbb66" stroke-width="5"/></svg>`;
const LAYERS = [['#000','on'],['#c03800','dim'],['#8548d6','off'],['#1433ff','on'],['#3d8a1c','on'],['#fff','on']];
const PI = (w, s, c = '#777') => `<svg width="${w}" height="30" viewBox="0 0 ${w} 30" fill="none" stroke="${c}" stroke-width="1.700">${s}</svg>`;
define('rh-layers', `<style>
:host{display:flex;flex-direction:column;flex:1;min-height:0}
.icons{display:flex;gap:11px;align-items:center}
.tbl{flex:1;background:#fff}
table{border-collapse:collapse;table-layout:fixed;width:100%}
th{font-weight:400;text-align:left;height:33px;background:#f1f1f1;border-bottom:1px solid #cbcbcb;padding:0 0 0 6px;white-space:nowrap;background-image:linear-gradient(#ccc,#ccc);background-size:1px 24px;background-position:100% 4px;background-repeat:no-repeat}
td{height:24px;padding:0}
td>svg,td>input{display:block;margin:auto}
td:first-child{text-align:right;padding-right:17px}
td>button{margin:auto}
td:nth-child(6){padding-right:7px}
.pop{padding:0 6px 0 9px;height:24px}
.pop select{width:100%;height:20px;color:#444}
.pop.l{padding-right:7px}
.sw{width:20px;height:20px;border:2px solid #111}
.o{width:20px;height:20px;border:1px solid #222;border-radius:50%;background:#fafafa}
footer{height:45px;border-top:1px solid #cfcfcf;display:flex;align-items:center;padding-left:25px;gap:25px;flex:none}
footer button{height:23px;background:linear-gradient(#fff,#f5f5f5);box-shadow:0 1px 1px #bbb,0 0 1px #bbb;border-radius:5px}
.pm{display:flex}.pm button{width:32px}.pm button:first-child{border-radius:5px 0 0 5px}.pm button:last-child{border-radius:0 5px 5px 0}
.g{width:47px;gap:12px}
</style><rh-panel-head heading="面板: 图层"><div class="icons">
${PI(32,'<path d="M1 13 16 2 31 13 16 24Z"/><path d="M6 16 1 18 16 28 31 18 26 16"/>','#4a80f5')}
${PI(30,'<path d="M6 3H18L24 9V27H6ZM18 3V9H24"/>')}
${PI(30,'<path d="M3 9 15 3 27 9V22L16 29 3 23ZM3 9 16 14 27 9M16 14V29"/>')}
${PI(32,'<path d="M8 26V5Q9 2 12 3H29Q31 4 30 8H26V26M26 3Q24 5 26 8M4 23H21Q23 27 26 28H5Q1 27 4 23"/>')}
${PI(32,'<rect x="2" y="3" width="28" height="22"/><rect x="5" y="6" width="22" height="15"/><path d="M11 28H21M14 25V28H18V25"/>')}
${PI(30,'<circle cx="15" cy="15" r="13"/><path d="M10 12C10 5 20 5 20 11 20 15 15 15 15 20" stroke-width="2.200"/><circle cx="15" cy="24" r="1"/>')}
${PI(30,'<path d="M2 20C14 18 20 10 21 3L27 2 29 8C27 18 18 27 7 30L2 24ZM2 20C8 20 12 24 12 28M20 4C22 8 26 9 29 9"/>')}
${PI(34,'<ellipse cx="17" cy="26" rx="15" ry="4" fill="#aaa" stroke="none"/><circle cx="15" cy="17" r="13" fill="#eee"/><path d="M10 9C14 5 17 2 21 1H32V8H26L19 12 12 11Z" fill="#e4e4e4"/><path d="M29 0V9"/>')}
</div></rh-panel-head>
<div class="tbl"><table><colgroup><col style="width:58px"><col style="width:32px"><col style="width:32px"><col style="width:32px"><col style="width:42px"><col style="width:33px"><col style="width:79px"><col style="width:32px"><col></colgroup>
<thead><tr><th>名称</th><th></th><th></th><th></th><th></th><th></th><th>线型</th><th></th><th>打印线宽</th></tr></thead><tbody>
${LAYERS.map(([c, m], i) => `<tr><td>...</td><td><input type="radio" name="cur" aria-label="当前图层"${i === 1 ? ' checked' : ''}></td><td>${bulb(m)}</td><td>${lock(m)}</td><td><button class="sw" style="background:${c}" aria-label="颜色"></button></td><td><button class="o" aria-label="材质"></button></td><td><div class="pop l"><select aria-label="线型"><option>Conti...</option></select>${UPDOWN}</div></td><td><svg width="22" height="22"><path d="M11 1 21 11 11 21 1 11Z" fill="${c}" stroke="#111" stroke-width="1.500"/></svg></td><td><div class="pop"><select aria-label="打印线宽"><option>Default</option></select>${UPDOWN}</div></td></tr>`).join('')}
</tbody></table></div>
<footer><div class="pm"><button aria-label="新增"><svg width="16" height="16" stroke="#444" stroke-width="1.500"><path d="M8 0V16M0 8H16"/></svg></button><button aria-label="删除"><svg width="16" height="16" stroke="#aaa" stroke-width="1.500"><path d="M0 8H16"/></svg></button></div><button class="g" aria-label="选项">${GEAR}${CHEV}</button></footer>`);

define('rh-logo', `<style>
:host{position:absolute;right:34px;bottom:35px;width:98px;height:41px;display:flex;align-items:center;justify-content:center;gap:3px;background:rgba(236,236,236,.9);border-radius:5px;box-shadow:0 1px 2px #aaa;color:#000}
.a{display:flex;flex-direction:column;align-items:center}
b{font:900 20px/25px "Noto Serif CJK SC","Noto Sans CJK SC",serif}
small{font:500 10px/14px "Noto Sans",sans-serif}
.z{background:#cf3a4c;color:#fff;width:19px;height:32px;padding:1px 0;font:700 8px/10px "Noto Sans CJK SC",sans-serif;text-align:center;display:flex;flex-direction:column}
</style><div class="a"><b>学犀牛</b><small>xuexiniu.com</small></div><div class="z"><span>中</span><span>文</span><span>网</span></div>`);

define('rh-status', `<style>
:host{display:flex;align-items:center;height:40px;background:linear-gradient(#d9d9d9,#cecece);padding:4px 0 0 6px}
.cmd{flex:1;display:flex;align-items:center;gap:3px}
.info{display:flex;align-items:center}
.pop{width:97px;height:22px;border:1px solid #999;border-radius:6px;padding:0 6px 0 9px;margin:0 20px 0 24px;background:#dcdcdc}
.x{width:114px}.y{width:118px}.z{width:258px}
</style><div class="cmd"><svg width="20" height="16" stroke="#777" stroke-width="1.500"><path d="M0 2H20M0 6H20M0 10H20M0 14H20"/></svg><span>Command: _PointsOff</span></div>
<div class="info"><span>Millimeters</span><div class="pop"><select aria-label="坐标系"><option>工作平面</option></select>${UPDOWN}</div><span class="x">X: 19.53</span><span class="y">Y: -27.40</span><span class="z">Z: 0.00</span></div>`);

define('rh-app', `<style>
:host{display:flex;flex-direction:column;height:100vh;position:relative}
main{flex:1;display:grid;grid-template-columns:212px minmax(0,1fr) 454px;min-height:0}
aside{display:flex;flex-direction:column;min-height:0;background:#ececec}
.left{border-right:2px solid #868686}
.right{border-left:2px solid #868686}
.mid{display:flex;flex-direction:column;min-height:0}
.views{flex:1;display:grid;grid-template:527fr 588fr/668fr 662fr;gap:5px 4px;background:#d9d9d9;min-height:0}
</style><rh-toolbar></rh-toolbar><main><aside class="left"><rh-toolbox></rh-toolbox><rh-osnap></rh-osnap></aside>
<div class="mid"><rh-tabs></rh-tabs><div class="views"><rh-viewport name="Top">${topView}</rh-viewport><rh-viewport name="Perspective" active>${perspView}</rh-viewport><rh-viewport name="Front">${frontView}</rh-viewport><rh-viewport name="Right">${rightView}</rh-viewport></div></div>
<aside class="right"><rh-properties></rh-properties><rh-layers></rh-layers></aside></main><rh-status></rh-status><rh-logo></rh-logo>`);
</script>
</body>
</html>
